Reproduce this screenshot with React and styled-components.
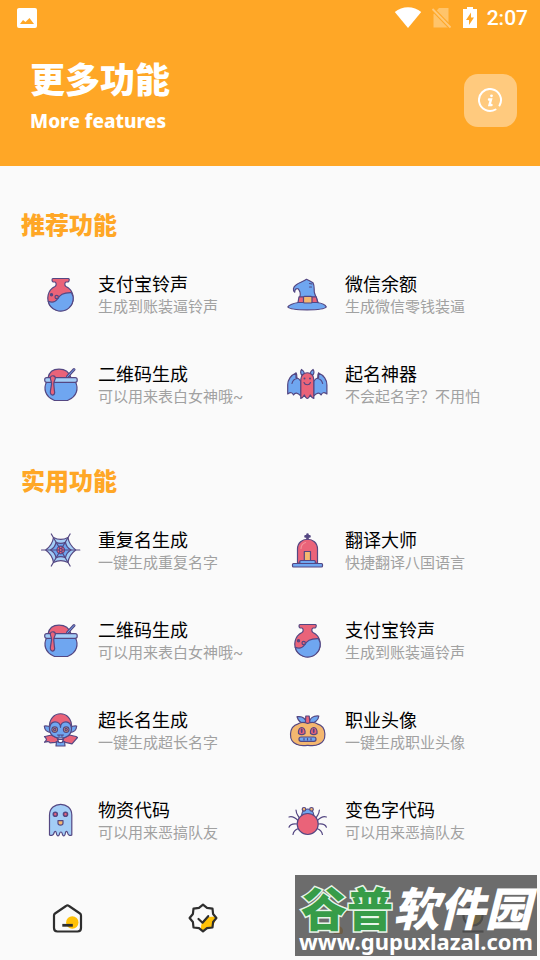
import React from 'react';
import styled, { createGlobalStyle } from 'styled-components';

const LINE = '#544782';
const RED = '#ea6379';
const BLUE = '#6fa6f0';
const SKY = '#a3cdf6';
const SAND = '#f4b76f';

const GlobalStyle = createGlobalStyle`
    * {
        box-sizing: border-box;
    }

    body {
        margin: 0;
        background: #fafafa;
        font-family: Roboto, "Noto Sans CJK SC", sans-serif;
    }

    h1, h2, p {
        margin: 0;
    }
`;

const Page = styled.div`
    position: relative;
    display: flex;
    flex-direction: column;
    min-height: 100vh;
`;

const Header = styled.header`
    background: #ffa726;
    color: #fff;
`;

const StatusBar = styled.div`
    display: flex;
    align-items: center;
    justify-content: space-between;
    height: 35px;
    padding: 0 12px 0 15px;

    svg {
        display: block;
    }
`;

const StatusIcons = styled.div`
    display: flex;
    align-items: center;
    gap: 9px;
`;

const Clock = styled.span`
    font-size: 21px;
    line-height: 24px;
    font-weight: 500;
`;

const TitleRow = styled.div`
    display: flex;
    align-items: center;
    justify-content: space-between;
    height: 131px;
    padding: 0 23px 0 30px;
`;

const Titles = styled.div`
    padding-bottom: 8px;
`;

const Title = styled.h1`
    font-family: "Noto Sans CJK SC", sans-serif;
    font-size: 35px;
    line-height: 48px;
    font-weight: 900;
`;

const Subtitle = styled.p`
    font-family: "Noto Sans", sans-serif;
    font-size: 19px;
    line-height: 38px;
    font-weight: 800;
`;

const InfoButton = styled.button`
    display: flex;
    align-items: center;
    justify-content: center;
    width: 53px;
    height: 53px;
    padding: 0;
    border: 0;
    border-radius: 14px;
    background: #ffca7e;
    color: #fff;
`;

const Main = styled.main`
    padding-top: 8px;
`;

const Section = styled.section`
    padding-top: 32px;
`;

const SectionTitle = styled.h2`
    margin-bottom: 8px;
    padding-left: 21px;
    color: #ffa726;
    font-family: "Noto Sans CJK SC", sans-serif;
    font-size: 24px;
    line-height: 36px;
    font-weight: 900;
`;

const Grid = styled.div`
    display: grid;
    grid-template-columns: 1fr 1fr;
    grid-auto-rows: 90px;
    padding: 0 5px 0 41px;
`;

const Feature = styled.button`
    display: flex;
    align-items: center;
    gap: 17px;
    padding: 0;
    border: 0;
    background: none;
    text-align: left;
    white-space: nowrap;
    font-family: inherit;

    svg {
        overflow: visible;
    }
`;

const FeatureText = styled.span`
    display: flex;
    flex-direction: column;
    padding-bottom: 2px;
`;

const FeatureName = styled.span`
    color: #000;
    font-size: 18px;
    line-height: 25px;
`;

const FeatureNote = styled.span`
    color: #a1a1a1;
    font-size: 15px;
    line-height: 20px;
`;

const TabBar = styled.nav`
    display: grid;
    grid-template-columns: repeat(4, 1fr);
    height: 84px;
    margin-top: auto;
`;

const Tab = styled.button`
    display: flex;
    align-items: center;
    justify-content: center;
    padding: 0;
    border: 0;
    background: none;
`;

const Watermark = styled.div`
    position: absolute;
    right: 3px;
    bottom: 4px;
    width: 242px;
    height: 81px;
    background: rgba(82, 82, 82, 0.85);
    color: #fff;
    text-align: center;
    white-space: nowrap;
`;

const MarkName = styled.div`
    padding-top: 8px;
    font-family: "Noto Sans CJK SC", sans-serif;
    font-size: 46px;
    line-height: 46px;
    font-weight: 900;
`;

const MarkGreen = styled.span`
    color: #379c48;
    -webkit-text-stroke: 3px #e8f5e9;
    paint-order: stroke fill;
`;

const MarkUrl = styled.div`
    font-family: "Noto Sans", sans-serif;
    font-size: 22px;
    line-height: 24px;
    font-weight: 700;
`;

const Drawing = ({ left = 0, children }) => (
    <svg width="40" height="40" viewBox={`${left} 0 40 40`} fill="none" stroke={LINE} strokeWidth="1.2" strokeLinejoin="round" strokeLinecap="round" aria-hidden="true">
        {children}
    </svg>
);

const Flask = () => (
    <Drawing>
        <path d="M12 3.500h15.500c1 0 1 3-.3 3.500h-2.200c-1.500.7-1.600 3.500 0 4.500a12.700 12.700 0 1 1-11 0c1.600-1 1.500-3.800 0-4.500h-2c-1.300-.5-1.300-3.500 0-3.500z" fill={RED} />
        <path d="M7.300 26.300c3.500 1.500 7 .8 9.200-2.300 2.500-4 5-6.500 14-6.300 1.500 2.500 2 5 1.600 7.500-1.500 9.500-10.500 12.500-17 10-4-1.500-7-4.500-7.800-8.900z" fill={BLUE} />
        <circle cx="15.700" cy="22" r="1.700" fill={RED} />
        <circle cx="10.500" cy="19.700" r="1.100" fill={LINE} />
    </Drawing>
);

const Pot = () => (
    <Drawing>
        <path d="M7 13c1-5.500 5-8.800 11-8.800s10.300 3 12 8.800z" fill={RED} />
        <path d="M26.500 11.500l6.500-7" stroke={LINE} strokeWidth="3" />
        <path d="M26.500 11.500l6.500-7" stroke={BLUE} strokeWidth="1" />
        <path d="M5.500 17C2.500 23 3.500 31.500 13.500 35.500h13c10-4 11-12.500 8-18.500z" fill={BLUE} />
        <rect x="3.700" y="12.700" width="32.500" height="4.600" rx="2" fill={SKY} />
        <path d="M9.300 12.500c1-2.500 5.200-2.300 5 .7-.2 2.300-1.600 2.800-1.500 6l.6 6.500c1.700 5.500-4.900 6-4 .5l1.200-7.500c0-2.500-1.300-3.500-1.300-6.200z" fill={RED} />
    </Drawing>
);

const Hat = () => (
    <Drawing left={1}>
        <path d="M11.500 27.500C7 28 1.500 30 .8 32c3 3.800 35.500 3.800 38.500 0-.8-2-5-4-9.500-4.500z" fill={BLUE} />
        <path d="M12 27.500l1-6c1-3.500 0-5.500-2-7.800-2-.7-3.300 1-3.300 3.500-2.200-1.500-1.500-5.500 1.300-7.200 2.500-2.500 7-3.200 10.500-5.700l3 1.500 3.500 2c2.200 4 .5 7.500 1.600 10.500l3.400 9.200z" fill={BLUE} />
        <path d="M12 21.800h17.300l1.400 5.700H11z" fill={RED} />
        <rect x="16.500" y="21.300" width="8.500" height="6.700" rx="1" fill={SAND} />
        <path d="M22.500 8.500l2.500.5M22.500 12h2" />
    </Drawing>
);

const BatWing = () => (
    <>
        <path d="M9 8C4 10 .5 15 .7 20v9c3-2 4.600-1.700 5.800 1 1.600-2.800 4-2.400 7.500 1V16.500c-1.500-2.500-3-3.500-5-4z" fill={BLUE} />
        <path d="M9 8c1.500 2 .3 3.500 1 5.500-2.500.5-4.500 2.500-5 5" />
    </>
);

const Bat = () => (
    <Drawing left={1}>
        <BatWing />
        <g transform="translate(40.600 0) scale(-1 1)">
            <BatWing />
        </g>
        <path d="M15 10.500c-1.500-2-1.500-4.500-.5-6 2.300 1.500 3 2.700 3 4.300zM25.600 10.500c1.500-2 1.500-4.500.5-6-2.300 1.500-3 2.700-3 4.300z" fill={BLUE} />
        <path d="M13.800 33.500V14.500c0-9 13-9 13 0v19c-1.200-.3-2.500-1.500-3.500-3.500-1 2-2 3.500-3 3.500s-2-1.500-3-3.500c-1 2-2.300 3.200-3.500 3.500z" fill={RED} />
        <circle cx="17.500" cy="13.500" r="1" fill={LINE} stroke="none" />
        <circle cx="23" cy="13.500" r="1" fill={LINE} stroke="none" />
        <path d="M17 17.500c1 3 5.500 3 6.500 0" />
    </Drawing>
);

const Web = () => (
    <Drawing>
        <path d="M4.700 19c4-3 7-7 7.800-12.500 5 2.700 9.500 2.700 14.500 0C27.700 12 31 16 34.700 19c-4 3-7 7-7.700 12.500-5-2.700-9.500-2.700-14.500 0C11.800 26 8.700 22 4.700 19z" fill={SKY} />
        <path d="M9.500 19c3-1.700 5-4.500 5.500-7.700 3 1.400 6.500 1.400 9.500 0 .5 3.200 2.500 6 5.500 7.700-3 1.700-5 4.500-5.500 7.700-3-1.400-6.500-1.400-9.500 0-.5-3.200-2.500-6-5.500-7.700z" fill={BLUE} />
        <circle cx="19.700" cy="19" r="3.800" fill={RED} />
        <path d="M.5 19h38.300M10.300 3l18.800 32M29.100 3L10.300 35" />
        <circle cx="19.700" cy="19" r="1.500" fill={RED} />
    </Drawing>
);

const Tomb = () => (
    <Drawing left={1}>
        <path d="M20.500 3.500v5M18.500 5.400h4" strokeWidth="2.600" />
        <path d="M10.500 32V18c0-13 20-13 20 0v14z" fill={RED} />
        <path d="M14 17.500c.2-3 2-5.300 4.500-6" stroke="#f3929b" />
        <rect x="17.300" y="20.500" width="6.200" height="9.500" fill={SAND} />
        <rect x="12.800" y="29.500" width="15.500" height="3.500" rx="1" fill={BLUE} />
        <rect x="5.500" y="32.500" width="30" height="3.500" rx="1" fill={BLUE} />
    </Drawing>
);

const Vampire = () => (
    <Drawing>
        <path d="M4 25.500l6.500-1.500 9 5 9-5 6.500 1.500 1.500 1-5.500 6.300-6.500-1.500-5-2.500-5 2.500-5.500.5c-.5-1.500-3-1.500-5.500-.5 1.500-2 3.500-2 0-5.800z" fill={RED} />
        <path d="M15.500 30.500l4 1.200 4-1.200.5 4.500h-9z" fill={BLUE} />
        <path d="M16.500 28.500h6l-1.500 3h-3z" fill="#fff" />
        <path d="M9.500 16.500c-2-2-5.500-1.500-6.200-1.500.3 4 3.200 6.500 7.200 6.500zM29.500 16.500c2-2 5.500-1.500 6.200-1.500-.3 4-3.200 6.500-7.200 6.500z" fill={BLUE} />
        <path d="M8.500 17C7 -2 32 -2 30.500 17z" fill={RED} />
        <path d="M8.500 17.500c.5-4.500 2.500-6.700 5.500-6.700 3.500 0 5.500 2.500 5.500 5.500 0-3 2-5.500 5.500-5.500 3 0 5 2.200 5.500 6.700 0 6.500-5 9.500-11 9.500s-11-3-11-9.500z" fill={BLUE} />
        <circle cx="13.700" cy="18.600" r="2.800" fill={SAND} />
        <circle cx="25.200" cy="18.600" r="2.800" fill={SAND} />
        <circle cx="13.700" cy="18.600" r="1.200" fill={RED} />
        <circle cx="25.200" cy="18.600" r="1.200" fill={RED} />
        <path d="M16.500 24h6M18 24.300v1M21 24.300v1" />
    </Drawing>
);

const Ghost = () => (
    <Drawing>
        <path d="M8.500 34V14C8.500 -.3 30.800 -.3 30.800 14v20c-1.800 1-3.800.3-4.300-2.500-.5-1.700-1.700-1.500-2 0-.3 4-2.700 4.500-3.300 1-.4-2-2.200-2-2.600 0-.6 3.500-3.100 3-3.400-1-.3-1.500-1.500-1.700-2 0-.6 2.800-3 3.500-4.700 2.500z" fill={SKY} />
        <circle cx="14.300" cy="13.300" r="2" fill={RED} strokeWidth="1.600" />
        <circle cx="24.500" cy="13.300" r="2" fill={RED} strokeWidth="1.600" />
        <path d="M17 19.700h5v2.500c0 2.500-5 2.500-5 0z" fill={SAND} />
    </Drawing>
);

const Pumpkin = () => (
    <Drawing left={1}>
        <path d="M19.500 12c-4.500 1-8-1.500-9.500-6.300 5-.7 8.500 1.300 9.500 6.300zM22 12c.5-5 4.500-7.500 9.800-7C31.500 9.500 27 13 22 12z" fill={BLUE} />
        <path d="M18.300 13l.5-8h3.400l.8 8z" fill={RED} />
        <path d="M20.700 12.500c4-1.800 7-1.300 9.500.3 10 2.500 10 18 1.500 20.500-3.500 2-7 1.500-11 1-4 .5-7.500 1-11-1C1.200 30.800 1.200 15.300 11.200 12.800c2.500-1.600 5.500-2.100 9.500-.3z" fill={SAND} />
        <path d="M11.500 22.500c-1-8 7.500-8 6.500 0-2 1.500-4.500 1.500-6.500 0zM23.500 22.500c-1-8 7.500-8 6.500 0-2 1.500-4.500 1.500-6.500 0z" fill={RED} />
        <path d="M14.700 18.500v2.500M26.700 18.500v2.500" strokeWidth="1.800" />
        <rect x="12" y="26" width="17" height="4.300" rx="2" fill={BLUE} />
        <path d="M17 27.500v1.500M20.500 27.500v1.500M24 27.500v1.500" />
    </Drawing>
);

const Spider = () => (
    <Drawing left={1}>
        <path d="M12 16.500c-1.500-3-2.500-2.500-3-7.500M11 19.500c-3-3-6-4.500-9-3.500M10 23c-4-.5-7 .5-8 3.200M11.500 27.500c-3 1-5 2.500-5.500 6M29.400 16.500c1.500-3 2.500-2.500 3-7.500M30.400 19.500c3-3 6-4.500 9-3.500M31.400 23c4-.5 7 .5 8 3.200M29.900 27.500c3 1 5 2.500 5.500 6" />
        <path d="M14.500 14.500c.5-5 3-6.500 6.200-6.500s5.700 1.500 6.200 6.500z" fill={BLUE} />
        <circle cx="17" cy="8.300" r="1.800" fill={SAND} />
        <circle cx="24.500" cy="8.300" r="1.800" fill={SAND} />
        <circle cx="20.700" cy="23" r="10.500" fill={RED} />
    </Drawing>
);

const TabDrawing = ({ children }) => (
    <svg width="32" height="32" viewBox="0 0 32 32" fill="none" stroke="#2e2e2e" strokeWidth="2.200" strokeLinejoin="round" strokeLinecap="round" aria-hidden="true">
        {children}
    </svg>
);

const tabs = [
    {
        label: '首页',
        drawing: (
            <TabDrawing>
                <circle cx="20.300" cy="20.500" r="6.200" fill="#ffc107" stroke="none" />
                <path d="M14 4c1-.8 2-.8 3 0l11 7.500c.8.600 1 1 1 2V26c0 2.300-1 3.500-3.500 3.500h-20c-2.500 0-3.500-1.200-3.500-3.500V13.500c0-1 .2-1.400 1-2z" />
                <path d="M10.300 23.300h10.500" strokeWidth="2.800" strokeLinecap="butt" />
            </TabDrawing>
        ),
    },
    {
        label: '认证',
        drawing: (
            <TabDrawing>
                <path d="M14 29c-1-9 4-16 14-14v5l-3 5-5 2z" fill="#ffc107" stroke="none" />
                <path d="M16 2.700l4 3.200 5.500.700.600 5.400 3.300 4-3.300 4-.6 5.500-5.500.600-4 3.300-4-3.300-5.500-.6-.6-5.500-3.300-4 3.300-4 .6-5.400 5.500-.7z" />
                <path d="M11.500 17l4 3.700 5.700-6.500" />
            </TabDrawing>
        ),
    },
    {
        label: '更多',
        drawing: (
            <TabDrawing>
                <g stroke="#ff8f00">
                    <path d="M2 13l9-6M16 10l6-5M20 12l8-4M8 17l9-4" />
                    <circle cx="16" cy="29" r="5" fill="#ff9800" stroke="none" />
                </g>
            </TabDrawing>
        ),
    },
    {
        label: '我的',
        drawing: (
            <TabDrawing>
                <circle cx="19" cy="17" r="6.500" fill="#ffc107" stroke="none" />
                <circle cx="16" cy="14" r="9.500" />
                <path d="M5.500 29.500h21" strokeLinecap="butt" />
            </TabDrawing>
        ),
    },
];

const sections = [
    {
        title: '推荐功能',
        items: [
            { name: '支付宝铃声', note: '生成到账装逼铃声', icon: Flask },
            { name: '微信余额', note: '生成微信零钱装逼', icon: Hat },
            { name: '二维码生成', note: '可以用来表白女神哦~', icon: Pot },
            { name: '起名神器', note: '不会起名字？不用怕', icon: Bat },
        ],
    },
    {
        title: '实用功能',
        items: [
            { name: '重复名生成', note: '一键生成重复名字', icon: Web },
            { name: '翻译大师', note: '快捷翻译八国语言', icon: Tomb },
            { name: '二维码生成', note: '可以用来表白女神哦~', icon: Pot },
            { name: '支付宝铃声', note: '生成到账装逼铃声', icon: Flask },
            { name: '超长名生成', note: '一键生成超长名字', icon: Vampire },
            { name: '职业头像', note: '一键生成职业头像', icon: Pumpkin },
            { name: '物资代码', note: '可以用来恶搞队友', icon: Ghost },
            { name: '变色字代码', note: '可以用来恶搞队友', icon: Spider },
        ],
    },
];

const App = () => {
    return (
        <>
            <GlobalStyle />
            <Page>
                <Header>
                    <StatusBar>
                        <svg width="24" height="24" viewBox="0 0 24 24" fill="#fff" aria-hidden="true">
                            <path fillRule="evenodd" d="M4 2h16a2 2 0 0 1 2 2v16a2 2 0 0 1-2 2H4a2 2 0 0 1-2-2V4c0-1.100.900-2 2-2zm1 16h14l-4.500-6-4 4-2.500-2z" />
                        </svg>
                        <StatusIcons>
                            <svg width="28" height="24" viewBox="0 0 28 24" fill="#fff" aria-hidden="true">
                                <path d="M14 22L.8 6C8-.3 20-.3 27.200 6z" />
                            </svg>
                            <svg width="22" height="24" viewBox="0 0 22 24" fill="none" aria-hidden="true">
                                <path d="M8 2h9.500v19.500h-15V8z" fill="#ffc46b" />
                                <path d="M1.500 3l18 18.500" stroke="#ffa726" strokeWidth="4" />
                                <path d="M1.500 3l18 18.500" stroke="#ffc97a" strokeWidth="1.800" />
                            </svg>
                            <svg width="16" height="24" viewBox="0 0 16 24" fill="#fff" aria-hidden="true">
                                <path fillRule="evenodd" d="M5 1h6v2h4v19H1V3h4zM9 6.500L4 14h3v5l5-7.500H9z" />
                            </svg>
                            <Clock>2:07</Clock>
                        </StatusIcons>
                    </StatusBar>
                    <TitleRow>
                        <Titles>
                            <Title>更多功能</Title>
                            <Subtitle>More features</Subtitle>
                        </Titles>
                        <InfoButton aria-label="关于">
                            <svg width="26" height="26" viewBox="1 1 26 26" fill="none" stroke="currentColor" strokeWidth="2" strokeLinecap="round" aria-hidden="true">
                                <path d="M18.500 22.500A11 11 0 1 1 22.500 18.500" />
                                <path d="M12 12.500h2l-1.500 5.500h2" strokeWidth="2.400" />
                                <circle cx="14.500" cy="8.800" r="1.400" fill="currentColor" stroke="none" />
                            </svg>
                        </InfoButton>
                    </TitleRow>
                </Header>
                <Main>
                    {sections.map((section) => (
                        <Section key={section.title}>
                            <SectionTitle>{section.title}</SectionTitle>
                            <Grid>
                                {section.items.map(({ name, note, icon: Icon }) => (
                                    <Feature key={name}>
                                        <Icon />
                                        <FeatureText>
                                            <FeatureName>{name}</FeatureName>
                                            <FeatureNote>{note}</FeatureNote>
                                        </FeatureText>
                                    </Feature>
                                ))}
                            </Grid>
                        </Section>
                    ))}
                </Main>
                <TabBar>
                    {tabs.map((tab) => (
                        <Tab key={tab.label} aria-label={tab.label}>
                            {tab.drawing}
                        </Tab>
                    ))}
                </TabBar>
                <Watermark>
                    <MarkName>
                        <MarkGreen>谷普</MarkGreen>
                        <em>软件园</em>
                    </MarkName>
                    <MarkUrl>www.gupuxlazal.com</MarkUrl>
                </Watermark>
            </Page>
        </>
    );
};

export default App;
